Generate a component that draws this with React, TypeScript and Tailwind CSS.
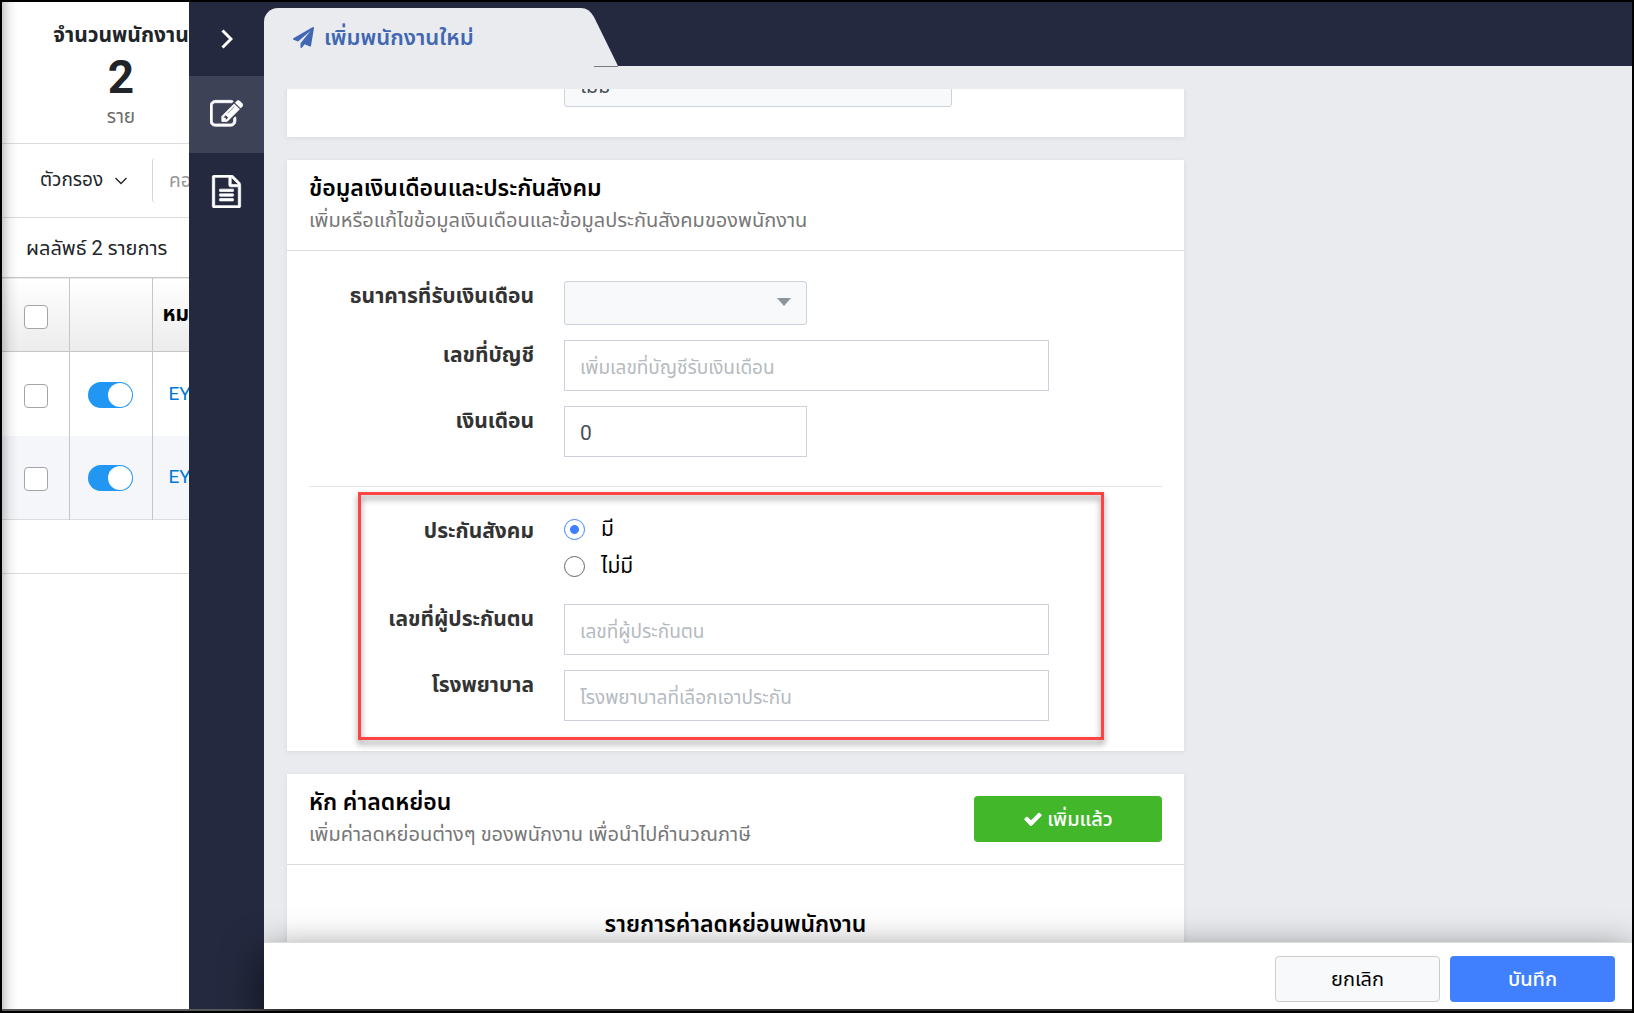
import React, { useState } from 'react';

const FONT = "font-['Roboto','Noto_Sans_Thai','Noto_Sans',sans-serif]";

const ICONS = {
  plane:
    'M1764 11q33 24 27 64l-256 1536q-5 29-32 45-14 8-31 8-11 0-24-5l-453-185-242 295q-18 23-49 23-13 0-22-4-19-7-30.500-23.500t-11.500-36.500v-349l864-1059-1069 925-395-162q-37-14-40-55-2-40 32-59l1664-960q15-9 32-9 20 0 36 11z',
  edit:
    'M888 1184l116-116-152-152-116 116v56h96v96h56zm440-720q-16-16-33 1l-350 350q-17 17-1 33t33-1l350-350q17-17 1-33zm80 594v190q0 119-84.500 203.500t-203.500 84.500h-832q-119 0-203.500-84.500t-84.500-203.500v-832q0-119 84.500-203.500t203.500-84.500h832q63 0 117 25 15 7 18 23 3 17-9 29l-49 49q-14 14-32 8-23-6-45-6h-832q-66 0-113 47t-47 113v832q0 66 47 113t113 47h832q66 0 113-47t47-113v-126q0-13 9-22l64-64q15-15 35-7t20 29zm-96-738l288 288-672 672h-288v-288zm444 132l-92 92-288-288 92-92q28-28 68-28t68 28l152 152q28 28 28 68t-28 68z',
  file:
    'M1596 380q28 28 48 76t20 88v1152q0 40-28 68t-68 28h-1344q-40 0-68-28t-28-68v-1600q0-40 28-68t68-28h896q40 0 88 20t76 48zm-444-244v376h376q-10-29-22-41l-313-313q-12-12-41-22zm384 1528v-1024h-416q-40 0-68-28t-28-68v-416h-768v1536h1280zm-1024-864q0-14 9-23t23-9h704q14 0 23 9t9 23v64q0 14-9 23t-23 9h-704q-14 0-23-9t-9-23v-64zm736 224q14 0 23 9t9 23v64q0 14-9 23t-23 9h-704q-14 0-23-9t-9-23v-64q0-14 9-23t23-9h704zm0 256q14 0 23 9t9 23v64q0 14-9 23t-23 9h-704q-14 0-23-9t-9-23v-64q0-14 9-23t23-9h704z',
  check:
    'M1671 566q0 40-28 68l-724 724-136 136q-28 28-68 28t-68-28l-136-136-362-362q-28-28-28-68t28-68l136-136q28-28 68-28t68 28l294 295 656-657q28-28 68-28t68 28l136 136q28 28 28 68z',
};

const Icon: React.FC<{ name: keyof typeof ICONS; className?: string }> = ({ name, className }) => (
  <svg viewBox="0 0 1792 1792" fill="currentColor" className={className} aria-hidden="true">
    <path d={ICONS[name]} />
  </svg>
);

const Checkbox: React.FC<{ label: string }> = ({ label }) => (
  <input
    type="checkbox"
    aria-label={label}
    className="block mx-auto w-6 h-6 appearance-none rounded-[4px] border border-[#a5a5a5] bg-white checked:bg-[#2196f3]"
  />
);

const Toggle: React.FC<{ label: string }> = ({ label }) => (
  <input
    type="checkbox"
    defaultChecked
    aria-label={label}
    className="block mx-auto w-[45px] h-[26px] appearance-none rounded-full bg-[#ccc] checked:bg-[#2196f3] p-px before:block before:h-6 before:w-6 before:rounded-full before:bg-white checked:before:ml-auto"
  />
);

const EmployeeList: React.FC = () => (
  <aside className="relative w-[187px] shrink-0 overflow-hidden bg-white text-[#212529] text-[19px]">
    <div className="w-[400px]">
      <section className="ml-[50px] w-[138px] h-[141px] flex flex-col items-center pt-[18px]">
        <h2 className="text-[21px] leading-[30px] font-bold whitespace-nowrap">จำนวนพนักงาน</h2>
        <p className="text-[46px] leading-[54px] font-bold">2</p>
        <p className="text-[19px] leading-[26px] text-[#6b6b6b]">ราย</p>
      </section>

      <div className="h-[75px] flex items-center border-y border-[#dcdcdc]">
        <button type="button" className="flex items-center gap-3 pl-[38px] w-[150px]">
          ตัวกรอง
          <svg viewBox="0 0 12 8" className="w-3 h-2" fill="none" stroke="currentColor" strokeWidth="1.4">
            <path d="M.5 1 6 6.500 11.500 1" />
          </svg>
        </button>
        <input
          type="text"
          aria-label="คอลัมน์"
          placeholder="คอลัมน์"
          className="h-[45px] w-[200px] rounded border-l border-[#d5d5d5] px-4 placeholder:text-[#999]"
        />
      </div>

      <p className="h-[59px] pl-6 leading-[60px] text-xl">ผลลัพธ์ 2 รายการ</p>

      <table className="w-full table-fixed border-collapse">
        <colgroup>
          <col className="w-[67px]" />
          <col className="w-[83px]" />
          <col />
        </colgroup>
        <thead>
          <tr className="h-[74px] border-y border-[#c6c6c6] bg-linear-to-b from-white to-[#ececec]">
            <th className="border-r border-[#c6c6c6] pt-1 pl-px"><Checkbox label="เลือกทั้งหมด" /></th>
            <th className="border-r border-[#c6c6c6]"></th>
            <th className="pl-[10px] text-left text-[21px] font-bold text-black">หมายเลข</th>
          </tr>
        </thead>
        <tbody>
          {[1, 2].map((row) => (
            <tr key={row} className="h-[84px] even:bg-[#f4f6f9] last:border-b border-[#dcdcdc]">
              <td className="border-r border-[#c6c6c6] pt-1 pl-px"><Checkbox label={`เลือก ${row}`} /></td>
              <td className="border-r border-[#c6c6c6] pt-[2px]"><Toggle label={`สถานะ ${row}`} /></td>
              <td className="pl-4"><a href="#" className="text-[#0078d7]">EY00{row}</a></td>
            </tr>
          ))}
        </tbody>
      </table>
      <div className="h-[54px] border-b border-[#dcdcdc]"></div>
    </div>
    <div className="absolute inset-y-0 left-0 w-4 bg-linear-to-r from-black/20 via-black/5 to-transparent pointer-events-none"></div>
  </aside>
);

const SideNav: React.FC = () => (
  <nav className="w-[75px] shrink-0 bg-[#24293f] text-white flex flex-col">
    <button type="button" aria-label="ปิด" className="h-[74px] flex items-center justify-center">
      <svg viewBox="0 0 12 20" className="w-3 h-5" fill="none" stroke="currentColor" strokeWidth="3">
        <path d="M1.500 1.500 10 10l-8.500 8.500" />
      </svg>
    </button>
    <button type="button" aria-label="แก้ไข" className="h-[77px] flex items-center justify-center bg-[#3d4257]">
      <Icon name="edit" className="w-[33px] h-[33px] stroke-current stroke-[40]" />
    </button>
    <button type="button" aria-label="เอกสาร" className="h-[77px] flex items-center justify-center">
      <Icon name="file" className="w-[33px] h-[33px] stroke-current stroke-[40]" />
    </button>
  </nav>
);

const Card: React.FC<{ children: React.ReactNode }> = ({ children }) => (
  <section className="w-[897px] max-w-full shrink-0 bg-white shadow-[0_1px_5px_rgba(0,0,0,0.08)]">{children}</section>
);

const CardHeader: React.FC<{ title: string; detail: string; children?: React.ReactNode }> = ({ title, detail, children }) => (
  <header className="h-[91px] px-[22px] flex items-center justify-between border-b border-[#dcdcdc]">
    <div>
      <h2 className="text-[23px] leading-[30px] font-semibold text-black">{title}</h2>
      <p className="text-xl leading-[32px] text-[#777]">{detail}</p>
    </div>
    {children}
  </header>
);

const Field: React.FC<{ id: string; label: string; children: React.ReactNode }> = ({ id, label, children }) => (
  <div className="flex gap-[30px]">
    <label htmlFor={id} className="w-[225px] shrink-0 text-right text-[21px] leading-[30px] font-bold text-[#333]">
      {label}
    </label>
    {children}
  </div>
);

const inputClass =
  'h-[51px] border border-[#cdd1d9] bg-white px-[15px] pt-[2px] text-[21px] text-[#495057] placeholder:text-[19px] placeholder:text-[#b5bac1]';

const SelectBox: React.FC<{ id: string; value: string; wide?: boolean }> = ({ id, value, wide }) => (
  <div className={wide ? 'relative w-[388px]' : 'relative w-[243px]'}>
    <select
      id={id}
      defaultValue={value}
      className="block w-full h-11 appearance-none rounded-[3px] border border-[#cdd1d9] bg-[#f8f9fb] px-[15px] pt-[2px] text-xl text-[#495057]"
    >
      <option value={value}>{value}</option>
    </select>
    <svg viewBox="0 0 14 8" className="absolute right-4 top-[17px] w-[14px] h-2 pointer-events-none" fill="#8e949e">
      <path d="M0 0h14L7 8z" />
    </svg>
  </div>
);

export default function App() {
  const [insured, setInsured] = useState(true);

  const radioClass =
    'w-[21px] h-[21px] appearance-none rounded-full border border-[#666] checked:border-[#4080ff] checked:bg-[radial-gradient(circle,#4080ff_4px,transparent_5px)]';

  return (
    <div className={`h-screen flex flex-col border-2 border-black bg-[#58595b] pb-[2px] overflow-hidden ${FONT}`}>
      <div className="flex-1 min-h-0 flex">
        <EmployeeList />
        <SideNav />

        <main className="flex-1 min-w-0 flex flex-col bg-[#e9ebee]">
          <header className="h-16 shrink-0 bg-[#24293f] pt-[6px] flex">
            <div className="relative w-[314px] h-[58px] bg-[#e9ebee] rounded-tl-[14px] flex items-center gap-[10px] pl-[29px] text-[#4267b2]">
              <Icon name="plane" className="w-[21px] h-[21px]" />
              <h1 className="text-[22px] font-semibold">เพิ่มพนักงานใหม่</h1>
            </div>
            <svg viewBox="0 0 40 59" className="w-10 h-[59px]" aria-hidden="true">
              <path d="M0 0H3Q11 0 16 9L40 58V59H0z" fill="#e9ebee" />
              <path d="M16 58.500H40" stroke="#777a80" />
            </svg>
          </header>

          <div className="mt-[23px] flex-1 min-h-0 overflow-hidden px-[23px]">
            <div className="-mt-[26px] flex flex-col gap-[23px]">
              <Card>
                <div className="px-[22px] pb-[30px]">
                  <Field id="status" label="">
                    <SelectBox id="status" value="ไม่มี" wide />
                  </Field>
                </div>
              </Card>

              <Card>
                <CardHeader title="ข้อมูลเงินเดือนและประกันสังคม" detail="เพิ่มหรือแก้ไขข้อมูลเงินเดือนและข้อมูลประกันสังคมของพนักงาน" />
                <div className="px-[22px] py-[30px]">
                  <div className="flex flex-col gap-[15px]">
                    <Field id="bank" label="ธนาคารที่รับเงินเดือน">
                      <SelectBox id="bank" value="" />
                    </Field>
                    <Field id="account" label="เลขที่บัญชี">
                      <input id="account" type="text" placeholder="เพิ่มเลขที่บัญชีรับเงินเดือน" className={`${inputClass} w-[485px]`} />
                    </Field>
                    <Field id="salary" label="เงินเดือน">
                      <input id="salary" type="text" defaultValue="0" className={`${inputClass} w-[243px]`} />
                    </Field>
                  </div>

                  <hr className="my-[29px] border-[#e3e3e3]" />

                  <div className="relative flex flex-col gap-[15px]">
                    <div className="flex gap-[30px] pb-[9px]" role="radiogroup" aria-labelledby="sso">
                      <span id="sso" className="w-[225px] shrink-0 text-right text-[21px] leading-[30px] font-bold text-[#333]">
                        ประกันสังคม
                      </span>
                      <div className="flex flex-col gap-[10px] text-[21px] leading-[27px] text-black">
                        <label className="flex items-center gap-4">
                          <input type="radio" name="sso" checked={insured} onChange={() => setInsured(true)} className={radioClass} />
                          มี
                        </label>
                        <label className="flex items-center gap-4">
                          <input type="radio" name="sso" checked={!insured} onChange={() => setInsured(false)} className={radioClass} />
                          ไม่มี
                        </label>
                      </div>
                    </div>
                    <Field id="ssoNumber" label="เลขที่ผู้ประกันตน">
                      <input id="ssoNumber" type="text" placeholder="เลขที่ผู้ประกันตน" className={`${inputClass} w-[485px]`} />
                    </Field>
                    <Field id="hospital" label="โรงพยาบาล">
                      <input id="hospital" type="text" placeholder="โรงพยาบาลที่เลือกเอาประกัน" className={`${inputClass} w-[485px]`} />
                    </Field>
                    <div className="absolute -top-6 -bottom-[19px] left-[49px] right-[58px] border-3 border-[#ff4242] drop-shadow-[0_4px_3px_rgba(0,0,0,0.45)] pointer-events-none"></div>
                  </div>
                </div>
              </Card>

              <Card>
                <CardHeader title="หัก ค่าลดหย่อน" detail="เพิ่มค่าลดหย่อนต่างๆ ของพนักงาน เพื่อนำไปคำนวณภาษี">
                  <button type="button" className="w-[188px] h-[46px] flex items-center justify-center gap-1 rounded-[4px] bg-[#42b72a] text-xl font-medium text-white">
                    <Icon name="check" className="w-5 h-5" />
                    เพิ่มแล้ว
                  </button>
                </CardHeader>
                <h3 className="pt-[45px] pb-10 text-center text-[23px] leading-[30px] font-semibold text-black">รายการค่าลดหย่อนพนักงาน</h3>
              </Card>
            </div>
          </div>

          <footer className="relative h-[67px] shrink-0 flex items-center justify-end gap-[10px] border-t border-[#dcdcdc] bg-white px-[17px] pt-[6px] shadow-[0_14px_40px_rgba(0,0,0,0.7)]">
            <button type="button" className="w-[165px] h-[46px] rounded-[4px] border border-[#ccc] bg-[#f8f9fb] text-xl text-black">
              ยกเลิก
            </button>
            <button type="button" className="w-[165px] h-[46px] rounded-[4px] bg-[#4080ff] text-xl font-medium text-white">
              บันทึก
            </button>
          </footer>
        </main>
      </div>
    </div>
  );
}
